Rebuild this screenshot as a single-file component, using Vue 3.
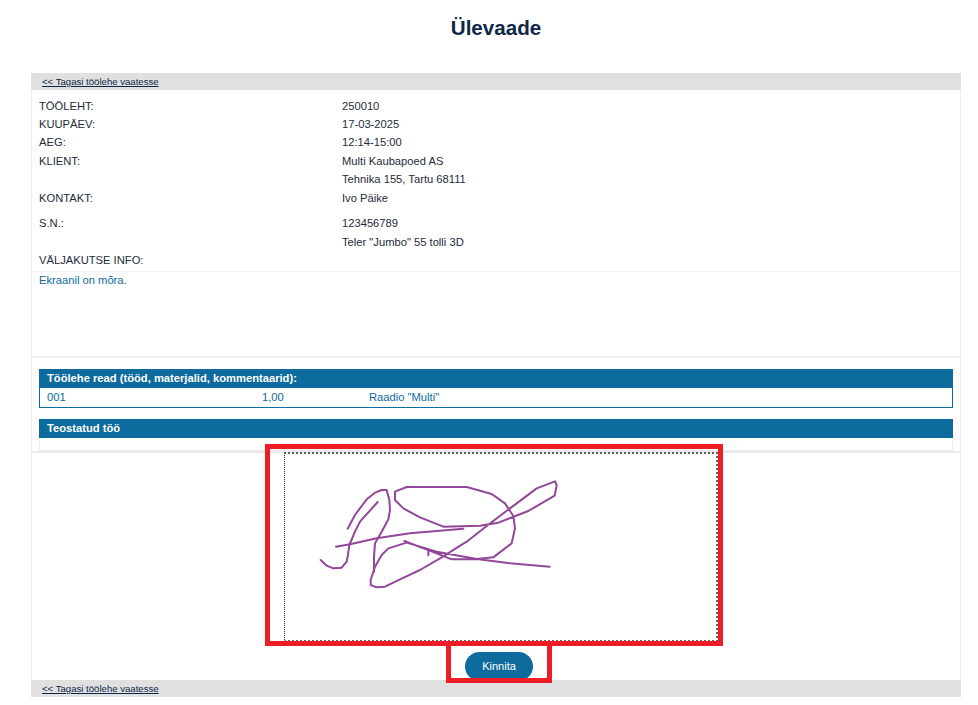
<template>
  <div class="page">
    <h1 class="title">Ülevaade</h1>
    <div class="card">
      <div class="back-bar"><a href="#" class="back">&lt;&lt; Tagasi töölehe vaatesse</a></div>

      <div class="info">
        <div v-for="row in rows" :key="row.id" class="info-row" :class="row.cls">
          <span>{{ row.label }}</span>
          <span>{{ row.value }}</span>
        </div>
      </div>

      <div class="problem">Ekraanil on mõra.</div>

      <div class="lines">
        <div class="block">
          <div class="block-head">Töölehe read (tööd, materjalid, kommentaarid):</div>
          <div class="line-row">
            <span>001</span>
            <span>1,00</span>
            <span>Raadio "Multi"</span>
          </div>
        </div>
        <div class="block-head done-head">Teostatud töö</div>
        <div class="done-body"></div>
      </div>

      <div class="sign">
        <div class="canvas">
          <svg class="signature" viewBox="75 42 1296 555" fill="none" stroke="#93479a" stroke-width="6" stroke-linejoin="round" stroke-linecap="round">
            <path v-for="(d, i) in strokes" :key="i" :d="d" />
          </svg>
        </div>
        <button class="confirm">Kinnita</button>
        <div class="mark mark-canvas"></div>
        <div class="mark mark-button"></div>
      </div>

      <div class="back-bar"><a href="#" class="back">&lt;&lt; Tagasi töölehe vaatesse</a></div>
    </div>
  </div>
</template>

<script setup>
const rows = [
  { id: 1, label: 'TÖÖLEHT:', value: '250010', cls: 'first' },
  { id: 2, label: 'KUUPÄEV:', value: '17-03-2025', cls: 'first' },
  { id: 3, label: 'AEG:', value: '12:14-15:00' },
  { id: 4, label: 'KLIENT:', value: 'Multi Kaubapoed AS' },
  { id: 5, label: '', value: 'Tehnika 155, Tartu 68111' },
  { id: 6, label: 'KONTAKT:', value: 'Ivo Päike' },
  { id: 7, label: 'S.N.:', value: '123456789', cls: 'spaced' },
  { id: 8, label: '', value: 'Teler "Jumbo" 55 tolli 3D' },
  { id: 9, label: 'VÄLJAKUTSE INFO:', value: '' },
]

// signature strokes, in 3x canvas units
const strokes = [
  'M263 266 L285 225 L320 178 L345 158 L365 150 L380 150 L388 180 L390 210 L385 238 L365 275 L345 310 L342 350 L342 395',
  'M353 186 L300 245 L285 275 L268 315 L263 350 L260 365 L245 383 L220 385 L200 377 L182 360',
  'M228 320 L270 313 L350 295 L450 280 L610 266',
  'M869 380 L750 370 L650 357 L530 335 L440 308 L385 325 L365 345 L345 380 L332 420 L332 435 L350 442 L375 440 L420 418 L480 390 L540 355 L620 305 L680 258 L750 205 L830 145 L885 124 L890 135 L884 167 L805 213 L715 248 L660 257 L550 260 L480 232 L430 205 L405 180 L405 155 L440 141 L620 141 L695 162 L735 190 L760 228 L765 265 L755 310 L700 352 L650 357 L575 358 L530 340 L433 303',
  'M505 335 L505 346',
]
</script>

<style>
body {
  background: #fff;
}
</style>

<style scoped>
.page {
  width: 930px;
  margin-left: 31px;
  font-family: "Liberation Sans", Arial, sans-serif;
  font-size: 11.2px;
  color: #1e2b3a;
}

.title {
  margin: 0;
  height: 73px;
  padding-top: 15px;
  box-sizing: border-box;
  text-align: center;
  font-size: 20.6px;
  line-height: 26px;
  font-weight: bold;
  color: #0f2747;
}

.card {
  border-left: 1px solid #eeeeee;
  border-right: 1px solid #eeeeee;
}

.back-bar {
  height: 17px;
  margin: 0 -1px;
  padding-left: 11px;
  background: #e0e0e0;
  line-height: 16px;
}

.back {
  font-size: 9.6px;
  color: #0f2747;
  text-decoration: underline;
}

.info {
  padding: 7px 0 1px;
  border-bottom: 1px solid #eeeeee;
}

.info-row {
  display: grid;
  grid-template-columns: 303px 1fr;
  height: 18.5px;
  line-height: 18.5px;
  padding-left: 7px;
}

.info-row.first {
  height: 18px;
  line-height: 19px;
}

.info-row.spaced {
  margin-top: 7px;
}

.problem {
  height: 86px;
  padding: 1px 7px 0;
  box-sizing: border-box;
  line-height: 14px;
  color: #0e6b9e;
  border-bottom: 2px solid #f0f0f0;
}

.lines {
  padding: 11px 7px 0;
  border-bottom: 2px solid #e8e8e8;
}

.block {
  border: 1px solid #0e6b9e;
  border-top: 0;
}

.block-head {
  height: 19px;
  padding-left: 8px;
  background: #0e6b9e;
  color: #fff;
  font-weight: bold;
  line-height: 18px;
}

.block .block-head {
  margin: 0 -1px;
}

.line-row {
  display: grid;
  grid-template-columns: 215px 107px 1fr;
  height: 18px;
  padding: 0 0 1px 7px;
  line-height: 18px;
  color: #0e6b9e;
}

.done-head {
  margin-top: 11px;
}

.done-body {
  height: 12px;
  border: 1px solid #eeeeee;
  border-top: 0;
}

.sign {
  position: relative;
  height: 228px;
  padding-left: 252px;
  box-sizing: border-box;
}

.canvas {
  width: 434px;
  height: 190px;
  margin-top: -1px;
  box-sizing: border-box;
  border: 2px dotted #666;
  border-left: 1px dotted #222;
}

.signature {
  display: block;
  width: 432px;
  height: 185px;
}

.confirm {
  display: block;
  width: 68px;
  height: 29px;
  margin: 10px 0 0 181px;
  padding: 0;
  border: 0;
  border-radius: 15px;
  background: #0e6b9e;
  color: #fff;
  font-family: inherit;
  font-size: 11px;
}

.mark {
  position: absolute;
  box-sizing: border-box;
  border: 5px solid #ee1c25;
  pointer-events: none;
}

.mark-canvas {
  left: 233px;
  top: -8px;
  width: 458px;
  height: 202px;
}

.mark-button {
  left: 414px;
  top: 194px;
  width: 106px;
  height: 37px;
  border-top: 0;
}
</style>
